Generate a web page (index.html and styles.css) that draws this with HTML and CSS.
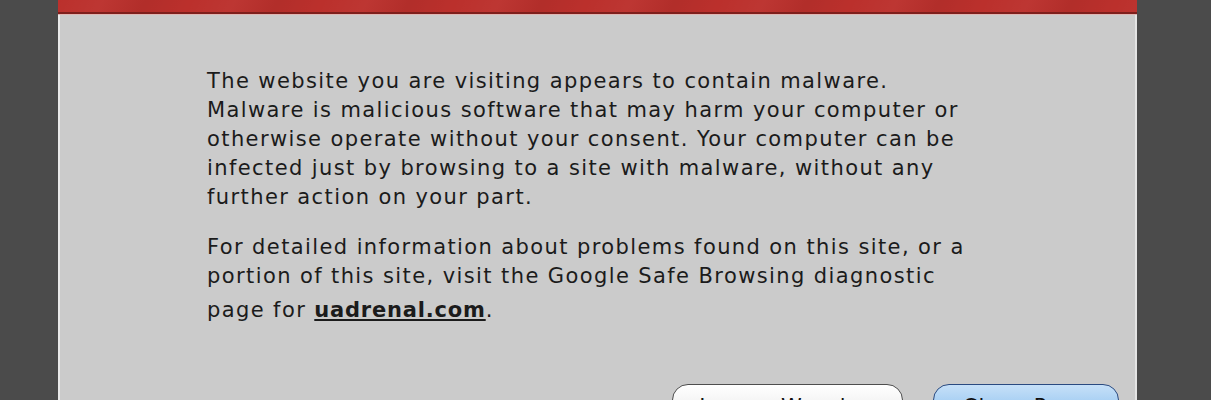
FILE: index.html
```html
<!DOCTYPE html>
<html lang="en">
<head>
<meta charset="utf-8">
<title>Malware warning</title>
<link rel="stylesheet" href="styles.css">
</head>
<body>
<div class="screen">
  <div class="stage">
    <div class="dialog">
      <div class="band"></div>
      <div class="body">
        <p class="para">The website you are visiting appears to contain malware.<br>Malware is malicious software that may harm your computer or<br>otherwise operate without your consent. Your computer can be<br>infected just by browsing to a site with malware, without any<br>further action on your part.</p>
        <p class="para">For detailed information about problems found on this site, or a<br>portion of this site, visit the Google Safe Browsing diagnostic<br>page for <a class="link" href="#">uadrenal.com</a>.</p>
        <div class="buttons">
          <button class="btn btn-plain" type="button">Ignore Warning</button>
          <button class="btn btn-default" type="button">Close Page</button>
        </div>
      </div>
    </div>
  </div>
  <div class="edge"></div>
</div>
</body>
</html>
```
FILE: styles.css
```css
html, body {
  margin: 0;
  padding: 0;
  height: 100%;
  overflow: hidden;
}

body {
  font-family: "DejaVu Sans", "Liberation Sans", sans-serif;
  background: #4b4b4b;
}

.screen {
  display: flex;
  height: 400px;
}

.stage {
  flex: 0 0 1211px;
  background: #4b4b4b;
  padding-left: 58px;
  box-sizing: border-box;
}

.edge {
  flex: 1 1 auto;
  background: #ffffff;
}

.dialog {
  width: 1079px;
  height: 440px;
  background: #cbcbcb;
  border-left: 2px solid #e9e9e9;
  border-right: 2px solid #e4e4e4;
  box-sizing: border-box;
  display: flex;
  flex-direction: column;
}

.band {
  height: 12px;
  margin: 0 -2px;
  background:
    repeating-linear-gradient(115deg,
      rgba(255,255,255,0) 0px,
      rgba(255,255,255,0.03) 40px,
      rgba(0,0,0,0.05) 80px,
      rgba(255,255,255,0) 120px),
    #bb302c;
  border-bottom: 2px solid #7e1f1c;
  box-shadow: 0 1px 0 #e0b7b4;
}

.body {
  padding: 53px 16px 0 147px;
  display: flex;
  flex-direction: column;
}

.para {
  margin: 0 0 21px 0;
  font-size: 21px;
  line-height: 29px;
  letter-spacing: 1.4px;
  color: #1b1b1b;
  white-space: nowrap;
}

.link {
  color: #1b1b1b;
  font-weight: bold;
  text-decoration: underline;
  letter-spacing: 0.8px;
  line-height: 39px;
}

.buttons {
  display: flex;
  justify-content: flex-end;
  gap: 30px;
  margin-top: 33px;
}

.btn {
  height: 38px;
  border-radius: 16px;
  font-family: "DejaVu Sans", "Liberation Sans", sans-serif;
  font-size: 21px;
  letter-spacing: 1.2px;
  color: #111;
  padding: 8px 0 0 0;
}

.btn-plain {
  width: 231px;
  border: 1px solid #4e4e4e;
  background: linear-gradient(#ffffff, #f4f4f4 50%, #e2e2e2 51%, #f4f4f4);
}

.btn-default {
  width: 186px;
  border: 1px solid #2a4a80;
  background: linear-gradient(#c6e0f8, #a7cff3 50%, #7fb6e8 51%, #b9dcf8);
}
```
